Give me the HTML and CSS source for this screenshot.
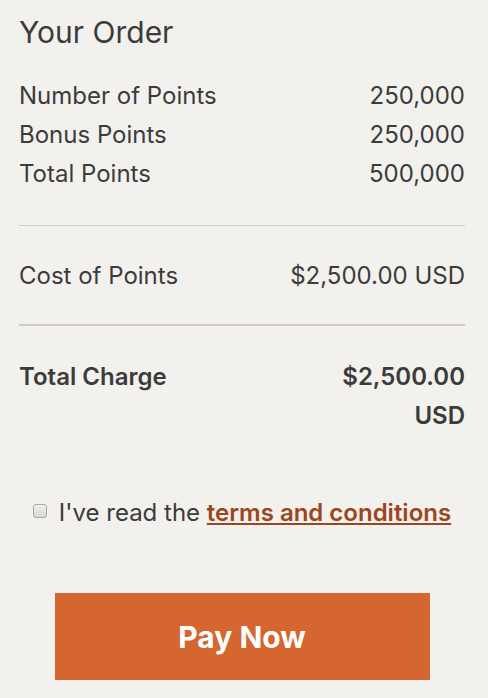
FILE: index.html
```html
<!DOCTYPE html>
<html lang="en">
  <head>
    <meta charset="UTF-8" />
    <meta name="viewport" content="width=device-width, initial-scale=1.0" />
    <title>Your Order</title>
    <link rel="stylesheet" href="styles.css">
  </head>
  <body>
    <div class="order">
      <h1 class="order-title">Your Order</h1>

      <div class="summary">
        <div class="row">
          <span>Number of Points</span>
          <span>250,000</span>
        </div>
        <div class="row">
          <span>Bonus Points</span>
          <span>250,000</span>
        </div>
        <div class="row">
          <span>Total Points</span>
          <span>500,000</span>
        </div>
      </div>

      <div class="cost">
        <div class="row">
          <span>Cost of Points</span>
          <span>$2,500.00 USD</span>
        </div>
      </div>

      <div class="total">
        <div class="row">
          <span>Total Charge</span>
          <span class="total-value">$2,500.00 USD</span>
        </div>
      </div>

      <label class="terms">
        <input type="checkbox" class="terms-check" />
        <span>I've read the <a href="#" class="terms-link">terms and conditions</a></span>
      </label>

      <div class="actions">
        <button class="btn-pay">Pay Now</button>
      </div>
    </div>
  </body>
</html>
```

FILE: styles.css
```css
:root {
  --bg: #f3f1ed;
  --text: #3b3b3b;
  --line: #cfccc6;
  --accent: #d56630;
  --link: #9b4620;
}

body {
  margin: 0;
  background-color: var(--bg);
  color: var(--text);
  font-family: Inter, "Liberation Sans", sans-serif;
}

.order {
  padding: 12px 23px 0 19px;
}

.order-title {
  font-size: 30px;
  font-weight: 400;
  margin: 0 0 24px;
  line-height: 40px;
}

.row {
  display: flex;
  justify-content: space-between;
  font-size: 24px;
  line-height: 39px;
}

.summary {
  padding-bottom: 32px;
  border-bottom: 1px solid var(--line);
}

.cost {
  padding: 30px 0 29px;
  border-bottom: 2px solid var(--line);
}

.total {
  padding-top: 31px;
  font-weight: 600;
}

.total-value {
  width: 140px;
  text-align: right;
}

.terms {
  display: flex;
  align-items: center;
  justify-content: center;
  gap: 12px;
  margin-top: 63px;
  font-size: 24px;
}

.terms-check {
  appearance: none;
  width: 14px;
  height: 14px;
  margin: 0 0 3px;
  border: 1px solid #a9a9a9;
  border-radius: 3px;
  background: linear-gradient(#f0f0f0, #d9d9d9);
}

.terms-link {
  color: var(--link);
  font-weight: 600;
}

.actions {
  display: flex;
  justify-content: center;
  margin-top: 66px;
}

.btn-pay {
  width: 375px;
  height: 87px;
  border: none;
  background-color: var(--accent);
  color: #fff;
  font-family: inherit;
  font-size: 30px;
  font-weight: 700;
  cursor: pointer;
}
```
